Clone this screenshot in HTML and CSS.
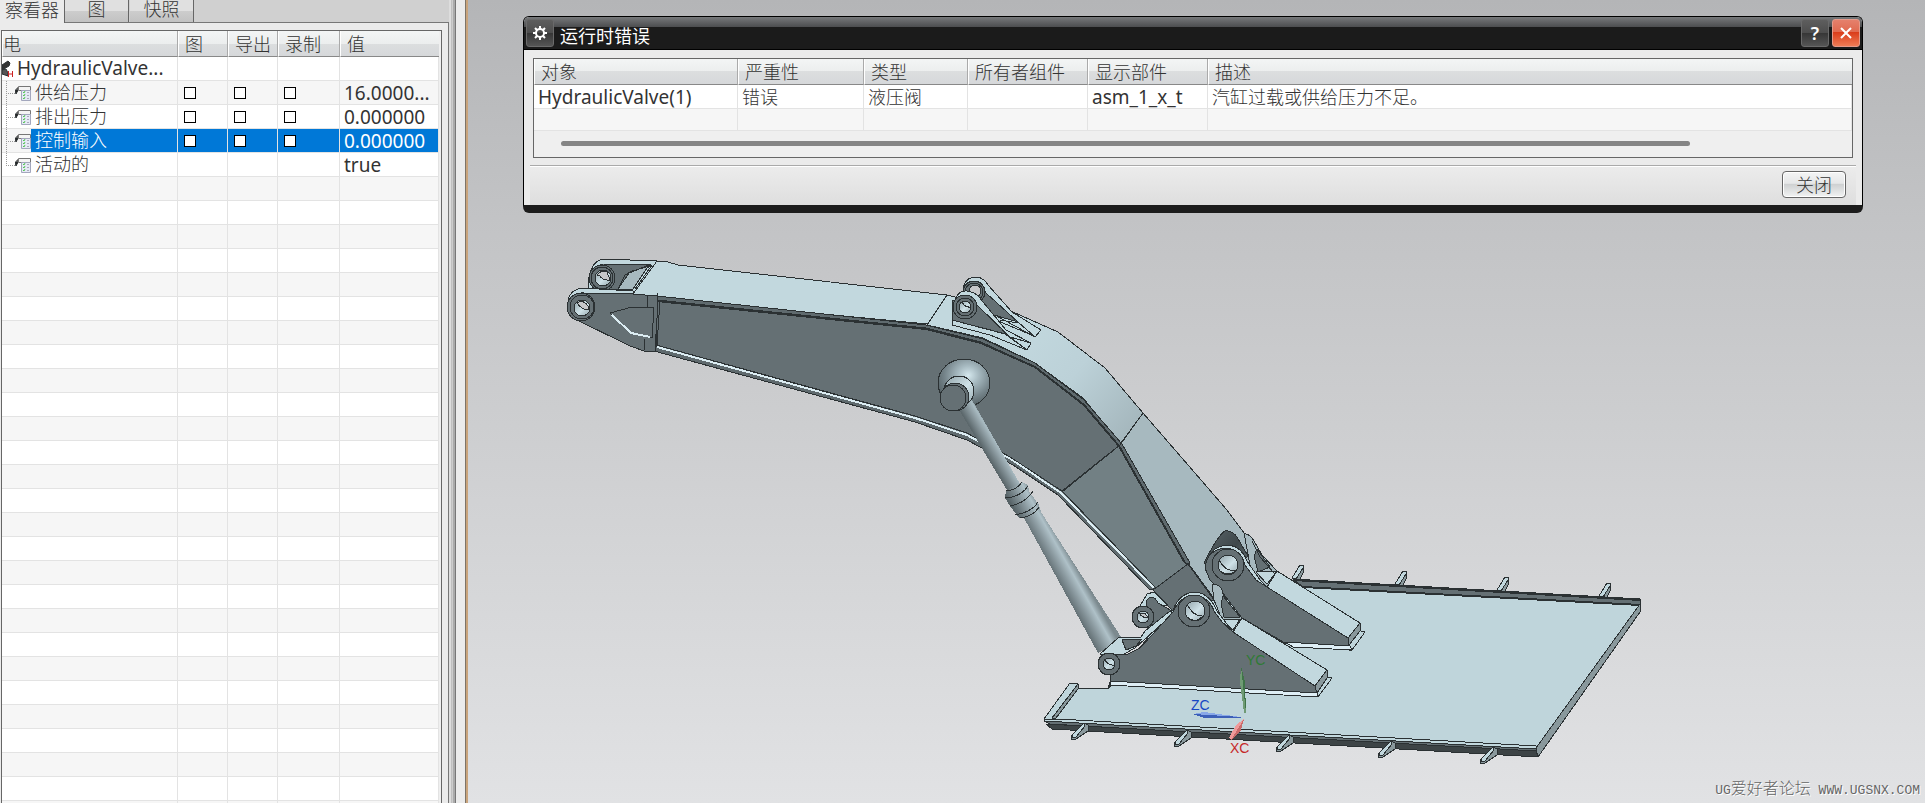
FILE: index.html
```
<!DOCTYPE html>
<html lang="zh-CN">
<head>
    <meta charset="UTF-8">
    <meta name="viewport" content="width=device-width, initial-scale=1.0">
    <title>运行时错误</title>
    <link rel="stylesheet" href="styles.css">
</head>
<body>
    <svg class="defs" width="0" height="0" aria-hidden="true">
        <symbol id="param" viewBox="0 0 16 16">
            <path d="M2 7V3h2" fill="none" stroke="#222"/>
            <path d="M0 5h3L1 9z" fill="#222"/>
            <path d="M3.500 1.500h12v4h-12z" fill="#f4f4f4" stroke="#777"/>
            <path d="M6.500 5.500h9v10h-9z" fill="#e6e9f6" stroke="#a3a7bd"/>
            <path d="M8 7l1 1 1-2M8 10l1 1 1-2M8 13l1 1 1-2" fill="none" stroke="#53c653"/>
            <path d="M12 7.500h2M12 10.500h2M12 13.500h2" stroke="#aab"/>
        </symbol>
    </svg>

    <aside class="side">
        <div class="tabs" role="tablist">
            <button class="tab active" role="tab" aria-selected="true">察看器</button>
            <button class="tab" role="tab">图</button>
            <button class="tab" role="tab">快照</button>
        </div>
        <div class="side-body">
            <div class="frame">
                <table class="grid params">
                    <colgroup>
                        <col>
                        <col class="w-plot">
                        <col class="w-plot">
                        <col class="w-record">
                        <col class="w-value">
                    </colgroup>
                    <thead>
                        <tr><th class="first">电</th><th>图</th><th>导出</th><th>录制</th><th>值</th></tr>
                    </thead>
                    <tbody>
                        <tr>
                            <td class="root latin">
                                <div class="node">
                                    <svg class="valve" width="12" height="18" viewBox="0 0 12 18" aria-hidden="true">
                                        <path d="M0 5l6-4 2 2-1 3-7 4z" fill="#333"/>
                                        <path d="M0 10l4-1 2 4v3L0 14z" fill="#555"/>
                                        <path d="M6.500 11v6M10.500 11v6M7 14h4" stroke="#c22" fill="none"/>
                                    </svg>
                                    <span>HydraulicValve...</span>
                                </div>
                            </td>
                            <td></td><td></td><td></td><td></td>
                        </tr>
                        <tr>
                            <td class="leaf"><div class="node"><i class="branch"></i><svg class="icon" aria-hidden="true"><use href="#param"/></svg><span>供给压力</span></div></td>
                            <td><input type="checkbox" aria-label="供给压力 图"></td>
                            <td><input type="checkbox" aria-label="供给压力 导出"></td>
                            <td><input type="checkbox" aria-label="供给压力 录制"></td>
                            <td class="latin">16.0000...</td>
                        </tr>
                        <tr>
                            <td class="leaf"><div class="node"><i class="branch"></i><svg class="icon" aria-hidden="true"><use href="#param"/></svg><span>排出压力</span></div></td>
                            <td><input type="checkbox" aria-label="排出压力 图"></td>
                            <td><input type="checkbox" aria-label="排出压力 导出"></td>
                            <td><input type="checkbox" aria-label="排出压力 录制"></td>
                            <td class="latin">0.000000</td>
                        </tr>
                        <tr class="selected">
                            <td class="leaf"><div class="node"><i class="branch"></i><svg class="icon" aria-hidden="true"><use href="#param"/></svg><span>控制输入</span></div></td>
                            <td><input type="checkbox" aria-label="控制输入 图"></td>
                            <td><input type="checkbox" aria-label="控制输入 导出"></td>
                            <td><input type="checkbox" aria-label="控制输入 录制"></td>
                            <td class="latin">0.000000</td>
                        </tr>
                        <tr>
                            <td class="leaf"><div class="node"><i class="branch last"></i><svg class="icon" aria-hidden="true"><use href="#param"/></svg><span>活动的</span></div></td>
                            <td></td><td></td><td></td>
                            <td class="latin">true</td>
                        </tr>
                        <tr class="filler"><td></td><td></td><td></td><td></td><td></td></tr>
                    </tbody>
                </table>
            </div>
        </div>
    </aside>
    <div class="splitter"></div>

    <main class="viewport">
        <svg class="model" viewBox="468 0 1457 803" preserveAspectRatio="xMidYMid slice" role="img" aria-label="HydraulicValve">
            <defs>
                <linearGradient id="bend" gradientUnits="userSpaceOnUse" x1="1020" y1="330" x2="1140" y2="430">
                    <stop offset="0" stop-color="#c2d8de"/>
                    <stop offset=".45" stop-color="#bcd1d8"/>
                    <stop offset="1" stop-color="#a3b5bb"/>
                </linearGradient>
                <linearGradient id="rod" gradientUnits="userSpaceOnUse" x1="984" y1="450" x2="999" y2="441">
                    <stop offset="0" stop-color="#5c686c"/>
                    <stop offset=".5" stop-color="#8d9ca2"/>
                    <stop offset=".8" stop-color="#a9bbc2"/>
                    <stop offset="1" stop-color="#7f8e93"/>
                </linearGradient>
                <linearGradient id="barrel" gradientUnits="userSpaceOnUse" x1="1057" y1="586" x2="1080" y2="573">
                    <stop offset="0" stop-color="#566266"/>
                    <stop offset=".45" stop-color="#8b9aa0"/>
                    <stop offset=".75" stop-color="#afc1c8"/>
                    <stop offset="1" stop-color="#7c8a8f"/>
                </linearGradient>
                <radialGradient id="ball" cx=".58" cy=".34" r=".65">
                    <stop offset="0" stop-color="#d5e8ee"/>
                    <stop offset=".3" stop-color="#a8bbc2"/>
                    <stop offset=".7" stop-color="#75848a"/>
                    <stop offset="1" stop-color="#566266"/>
                </radialGradient>
                <linearGradient id="hump" x1="0" y1="0" x2="1" y2="1">
                    <stop offset="0" stop-color="#5b666a"/>
                    <stop offset=".5" stop-color="#3f484b"/>
                    <stop offset="1" stop-color="#6c797d"/>
                </linearGradient>
                <linearGradient id="bore" x1="0" y1="0" x2="1" y2="1">
                    <stop offset="0" stop-color="#8fa0a6"/>
                    <stop offset=".55" stop-color="#cfe2e8"/>
                    <stop offset="1" stop-color="#93a4aa"/>
                </linearGradient>
                <g id="fin-far">
                    <path class="lit" d="M1395 584l8-13 4 1-6 13z"/>
                    <path class="edge" d="M1399 585l7-11v5l-3 6z"/>
                </g>
                <g id="fin-near">
                    <path class="edge" d="M1391 741l4 2v6l-12 8h-5l1-4z"/>
                    <path class="lit" d="M1391 741l1 3-9 11-4 0v-2z"/>
                </g>
            </defs>

            <!-- base plate -->
            <g>
                <use href="#fin-far" x="-103" y="-6"/>
                <use href="#fin-far"/>
                <use href="#fin-far" x="102" y="6"/>
                <use href="#fin-far" x="204" y="12"/>
                <path class="plate" d="M1044 719L1070 683 1078 684 1079 688 1108 689 1200 570 1300 583 1640 601V610L1538 757 1537 748z"/>
                <path class="side" d="M1293 579L1640 599V605L1303 587z"/>
                <path class="thick" d="M1293 580L1640 600M1303 587L1640 605"/>
                <path class="edge" d="M1640 604V612L1538 757 1536 748z"/>
                <path class="edge" d="M1078 684V689L1056 718H1052z"/>
                <path class="line" d="M1078 684L1052 718M1079 688H1092L1108 689 1110 682"/>
                <path class="lit" d="M1044 719L1058 719 1536 746V749L1044 721z"/>
                <path class="side" d="M1044 721L1536 749V752L1050 724z"/>
                <path class="deep" d="M1046 724L1536 751 1538 757 1052 729z"/>
                <use href="#fin-near" x="-307" y="-18"/>
                <use href="#fin-near" x="-204" y="-11"/>
                <use href="#fin-near" x="-102" y="-6"/>
                <use href="#fin-near"/>
                <use href="#fin-near" x="102" y="6"/>
            </g>

            <!-- rear boom lugs -->
            <path class="lit" d="M588 290Q588 262 603 259L657 261 633 294H600z"/>
            <path class="side" d="M590 278Q592 266 603 264L651 265 618 290 605 289z"/>
            <path class="mid" d="M618 289L629 273 649 265 633 289z"/>
            <path class="line" d="M618 289L625 275 632 271 650 266M635 289L652 265"/>
            <circle class="side" cx="602" cy="278" r="13"/>
            <circle class="line" cx="602" cy="278" r="11"/>
            <circle class="bore" cx="603" cy="278" r="8"/>
            <path class="hole" d="M597 275Q600 270 607 272L610 280Q603 281 599 275z"/>

            <!-- far bracket on the base -->
            <path class="mid" d="M1240 536Q1247 530 1254 541L1262 555 1277 571 1267 587 1250 570z"/>
            <path class="side" d="M1254 556L1257 549 1270 567 1258 572z"/>
            <path class="lit" d="M1256 572L1277 571 1267 584z"/>
            <path class="line" d="M1252 541L1260 557 1274 573"/>

            <!-- boom -->
            <path class="face" d="M657 261L668 262 678 265 947 295 953 297 1013 312 1058 332 927 324 657 298 633 294z"/>
            <path class="bend" d="M947 295L1013 312 1058 332 1105 368 1143 413 1121 444 1083 398 1035 363 983 338 927 325z"/>
            <path class="lower" d="M1143 413L1227 510 1244 533 1250 565 1213 597 1188 563 1121 443z"/>
            <path class="side" d="M657 296L760 308 926 325 983 339 1035 363 1084 400 1121 444 1062 492 1010 459 967 435 915 417 656 347z"/>
            <path class="side2" d="M1121 444L1188 564 1153 590 1062 491z"/>
            <path class="rim" d="M657 296L926 325 983 339 1035 363 1084 400 1122 444 1190 563 1186 564 1119 446 1084 405 1035 367 981 342 926 328 657 300z"/>
            <path class="thick" d="M657 301L926 329 981 343 1035 367 1084 405 1119 446 1185 563"/>
            <path class="rim" d="M654 346L915 416 967 433 1010 457 1062 491 1156 588 1150 590 1058 495 1013 465 967 440 915 422 654 351z"/>
            <path class="glint" d="M657 347L915 418 967 435 1011 459 1061 493 1154 588"/>
            <path class="line" d="M656 345L915 416 967 433 1010 457 1062 491 1156 588"/>
            <path class="line" d="M947 295L927 325M1143 413L1120 445 1062 492M660 300L657 346M654 346V351"/>

            <!-- front boom lug -->
            <path class="lit" d="M568 300Q570 290 582 288L633 291V295L580 296z"/>
            <path class="side" d="M570 300Q575 292 584 293L633 294 657 296 658 302 655 351H644L630 346 577 320z"/>
            <path class="line" d="M657 293V300L660 301M647 296V307M644 339V350"/>
            <path class="line" d="M610 313L632 307 654 308 652 338 630 333z"/>
            <path class="glint" d="M612 315L631 333 650 337"/>
            <circle class="side" cx="581" cy="307" r="14"/>
            <circle class="line" cx="582" cy="307" r="12"/>
            <circle class="bore" cx="582" cy="308" r="8"/>
            <path class="hole" d="M577 303Q583 299 588 306V310Q581 309 577 303z"/>

            <!-- brackets on top of the boom -->
            <path class="side" d="M962 293L985 290 1013 314 1018 322 994 315z"/>
            <path class="lit" d="M963 290Q964 277 977 277 984 278 988 285L1012 312 1041 330 1035 337 1018 322 986 293 980 282z"/>
            <path class="lit" d="M995 315L1035 337 1027 333 998 321z"/>
            <circle class="side" cx="974" cy="292" r="11"/>
            <circle class="line" cx="974" cy="292" r="9"/>
            <circle class="hole" cx="975" cy="291" r="6"/>
            <path class="lit" d="M952 320L1005 334 1027 350 990 335 952 325z"/>
            <path class="side" d="M952 301L978 300 1006 334 952 320z"/>
            <path class="lit" d="M954 303Q957 290 967 291 975 292 979 297L1006 330 1031 343 1027 350 1010 337 976 304 969 296z"/>
            <circle class="side" cx="965" cy="307" r="12"/>
            <circle class="line" cx="965" cy="307" r="9"/>
            <circle class="bore" cx="965" cy="307" r="6"/>
            <path class="line" d="M962 302Q965 308 971 307M1000 320L1018 323M1010 337L1031 343"/>

            <!-- cylinder -->
            <ellipse class="ball" cx="964" cy="383" rx="26" ry="24"/>
            <path class="rod" d="M958 408L972 400 1020 484 1008 492z"/>
            <circle class="bore" cx="959" cy="391" r="15"/>
            <circle class="side" cx="955" cy="397" r="14"/>
            <circle class="side" cx="953" cy="398" r="13"/>
            <path class="barrel" d="M1006 491L1022 482 1028 485 1029 491 1039 505 1041 512 1123 640 1098 653 1024 518 1019 518 1010 506 1005 498z"/>
            <path class="line" d="M1006 491Q1017 490 1022 482M1005 498Q1021 497 1028 486M1010 506Q1026 503 1033 491M1015 515Q1032 512 1038 502M1020 518Q1034 516 1039 507"/>

            <!-- far bracket body -->
            <path class="hump" d="M1204 563Q1218 535 1225 531 1232 530 1237 537L1248 556 1220 580z"/>
            <path class="lit" d="M1205 570Q1208 545 1229 545 1242 547 1247 561L1260 580 1267 587 1260 584 1240 567 1226 549z"/>
            <path class="side" d="M1205 568Q1207 549 1227 548 1240 550 1245 565L1256 580 1267 587 1348 638 1349 646 1285 643 1242 618 1222 592 1210 580z"/>
            <path class="lit" d="M1267 587L1277 571 1360 623 1348 638z"/>
            <path class="edge" d="M1348 638L1360 623V631L1349 645z"/>
            <path class="glow" d="M1285 642L1350 646 1352 650 1293 647z"/>
            <path class="line" d="M1361 631L1365 632 1352 650H1349"/>
            <circle class="side" cx="1228" cy="565" r="16"/>
            <circle class="bore" cx="1228" cy="565" r="10"/>
            <path class="line" d="M1219 560Q1226 573 1237 570M1220 571Q1228 577 1236 571"/>

            <!-- boom foot and the small lug -->
            <path class="side" d="M1153 590L1188 564 1214 600 1174 612z"/>
            <path class="mid" d="M1212 584Q1222 584 1223 594L1230 606 1242 618 1233 632 1221 617 1214 600z"/>
            <path class="side" d="M1221 604L1223 596 1240 617H1224z"/>
            <path class="lit" d="M1223 620L1240 619 1233 630z"/>
            <path class="lit" d="M1140 606L1147 594 1154 592 1167 605 1150 606z"/>
            <path class="side" d="M1147 600Q1153 593 1158 603L1172 611 1155 627 1143 628z"/>
            <circle class="side" cx="1143" cy="617" r="11"/>
            <circle class="bore" cx="1143" cy="617" r="6"/>
            <path class="hole" d="M1139 613h6l3 5q-6 0-9-5z"/>

            <!-- near bracket body -->
            <path class="lit" d="M1100 654L1118 638 1141 637 1145 631 1170 611 1173 614 1155 630 1135 648 1124 654z"/>
            <path class="side" d="M1122 640L1142 639 1136 646 1126 650z"/>
            <path class="lit" d="M1173 610Q1180 592 1196 592 1210 594 1217 611L1233 632 1220 620 1196 596z"/>
            <path class="side" d="M1173 612Q1181 595 1194 596 1209 596 1214 611L1222 622 1233 632 1315 686 1317 693 1110 681V675L1099 666 1103 654H1128L1140 648z"/>
            <path class="lit" d="M1233 632L1242 618 1327 670 1315 686z"/>
            <path class="edge" d="M1315 686L1327 670V678L1317 693z"/>
            <path class="glow" d="M1110 681L1317 693 1318 697 1110 685z"/>
            <path class="line" d="M1328 677L1332 678 1318 697"/>
            <circle class="side" cx="1194" cy="611" r="16"/>
            <circle class="bore" cx="1195" cy="611" r="10"/>
            <path class="line" d="M1187 604Q1193 617 1204 616M1187 617Q1195 624 1202 617"/>
            <circle class="side" cx="1109" cy="664" r="11"/>
            <circle class="bore" cx="1109" cy="664" r="6"/>
            <path class="line" d="M1105 660Q1108 666 1115 665"/>

            <!-- coordinate triad -->
            <path d="M1241 666L1245 682 1246 713H1244L1240 682z" fill="#6f9a74"/>
            <path d="M1241 666L1245 682 1246 713z" fill="#3f7448"/>
            <path d="M1193 714L1204 712 1241 717V718L1204 718z" fill="#89a8e8"/>
            <path d="M1193 714L1241 717V718L1204 718z" fill="#3c5fb8"/>
            <path d="M1244 719L1241 730 1231 740 1229 738 1236 725z" fill="#ef9a9a"/>
            <path d="M1244 719L1241 730 1231 740z" fill="#c96b6b"/>
            <text x="1246" y="665" fill="#2f7a35">YC</text>
            <text x="1191" y="710" fill="#1746c4">ZC</text>
            <text x="1230" y="753" fill="#c62828">XC</text>
        </svg>

        <section class="dialog" role="dialog" aria-labelledby="dialog-title">
            <header class="titlebar">
                <button class="tool" aria-label="选项">
                    <svg width="16" height="16" viewBox="0 0 16 16" aria-hidden="true">
                        <circle cx="8" cy="8" r="4" fill="none" stroke="#fff" stroke-width="2"/>
                        <path d="M8 1v3M8 12v3M1 8h3M12 8h3M3 3l2 2M11 11l2 2M13 3l-2 2M5 11l-2 2" stroke="#fff" stroke-width="2"/>
                    </svg>
                </button>
                <h1 id="dialog-title">运行时错误</h1>
                <button class="tool" aria-label="帮助">?</button>
                <button class="tool close" aria-label="关闭窗口">
                    <svg width="14" height="14" viewBox="0 0 14 14" aria-hidden="true">
                        <path d="M2 2l10 10M12 2L2 12" stroke="#fff" stroke-width="2"/>
                    </svg>
                </button>
            </header>
            <div class="dialog-body">
                <div class="frame errors-frame">
                    <table class="grid errors">
                        <colgroup>
                            <col class="w-object">
                            <col class="w-severity">
                            <col class="w-type">
                            <col class="w-part">
                            <col class="w-part">
                            <col>
                        </colgroup>
                        <thead>
                            <tr><th>对象</th><th>严重性</th><th>类型</th><th>所有者组件</th><th>显示部件</th><th>描述</th></tr>
                        </thead>
                        <tbody>
                            <tr><td class="latin">HydraulicValve(1)</td><td>错误</td><td>液压阀</td><td></td><td class="latin">asm_1_x_t</td><td>汽缸过载或供给压力不足。</td></tr>
                            <tr><td></td><td></td><td></td><td></td><td></td><td></td></tr>
                        </tbody>
                    </table>
                    <div class="scroll"><div class="thumb"></div></div>
                </div>
            </div>
            <footer class="actions">
                <button class="btn">关闭</button>
            </footer>
        </section>

        <p class="watermark">UG<span>爱好者论坛</span> WWW.UGSNX.COM</p>
    </main>
</body>
</html>
```
FILE: styles.css
```
:root {
    --panel: #ebebeb;
    --frame: #666666;
    --grid-line: #e3e3e3;
    --row-alt: #f6f6f6;
    --select: #0078d7;
    --edge: #2b3133;
}

* {
    box-sizing: border-box;
}

body {
    margin: 0;
    height: 100vh;
    display: flex;
    overflow: hidden;
    background: var(--panel);
    color: #333;
    font: 18px/22px "Noto Sans", "Noto Sans CJK SC", sans-serif;
}

button {
    font: inherit;
    color: inherit;
    padding: 0;
}

.defs {
    position: absolute;
}

/* side panel */
.side {
    width: 449px;
    flex: none;
    display: flex;
    flex-direction: column;
}

.tabs {
    display: flex;
    flex: none;
    height: 23px;
    background: #d0d0d0;
    border-bottom: 1px solid #777;
}

.tab {
    width: 64px;
    height: 22px;
    margin-right: 1px;
    padding-bottom: 4px;
    line-height: 18px;
    font-weight: 300;
    border: 0;
    border-right: 1px solid #666;
    background: linear-gradient(#e0e0e0 50%, #cdcdcd 50%, #c2c2c2);
}

.tab.active {
    width: 65px;
    height: 23px;
    margin-right: 0;
    background: var(--panel);
}

.side-body {
    flex: 1;
    min-height: 0;
    display: flex;
    padding: 7px 6px 0 1px;
    border-right: 1px solid #777;
}

.frame {
    flex: 1;
    border: 1px solid var(--frame);
    background: #efefef;
}

.side .frame {
    border-bottom: 0;
    padding-right: 2px;
}

.splitter {
    width: 19px;
    flex: none;
    background: linear-gradient(90deg,
        #ddd 0 2px, #bfbfbf 2px 3px, #ccc 3px 4px, #aaa 4px 6px, #777 6px 7px,
        var(--panel) 7px 16px, #7d7468 16px 17px, #c9a47c 17px);
}

/* tables */
.grid {
    width: 100%;
    table-layout: fixed;
    border-collapse: separate;
    border-spacing: 0;
}

.grid th {
    height: 26px;
    padding: 0 0 0 6px;
    font-weight: 300;
    text-align: left;
    border-right: 1px solid #aaa;
    border-left: 1px solid #fff;
    border-bottom: 1px solid #888;
    background: linear-gradient(#f3f5f5, #eceeee 50%, #dcdedf 50%, #d6d8da);
}

.grid td {
    height: 24px;
    padding: 0 0 0 4px;
    line-height: 22px;
    font-weight: 300;
    white-space: nowrap;
    border-right: 1px solid var(--grid-line);
    border-bottom: 1px solid var(--grid-line);
    background: #fff;
}

.grid td.latin {
    font-size: 19px;
    font-weight: 400;
}

.grid th:last-child {
    border-right: 0;
}

.grid tbody tr:nth-child(even) td {
    background: var(--row-alt);
}

.params {
    height: 100%;
}

.params .w-plot { width: 50px; }
.params .w-record { width: 62px; }
.params .w-value { width: 99px; }

.params th.first,
.params td.root,
.params td.leaf {
    padding-left: 0;
}

.grid tbody tr.filler td {
    height: auto;
    border-bottom: 0;
    background: repeating-linear-gradient(var(--row-alt) 0 23px, var(--grid-line) 23px 24px, #fff 24px 47px, var(--grid-line) 47px 48px);
}

.grid tbody tr.selected td {
    color: #fff;
}

.grid tbody tr.selected td:not(.leaf),
.selected .node span {
    background: var(--select);
}

.node {
    display: flex;
    align-items: center;
    height: 23px;
}

.node span {
    flex: 1;
    padding: 0 0 1px 4px;
}

.root .node span {
    padding-left: 3px;
}

.branch {
    align-self: stretch;
    width: 9px;
    margin-left: 4px;
    background:
        repeating-linear-gradient(#999 0 1px, transparent 1px 2px) 0 0 / 1px 100% no-repeat,
        repeating-linear-gradient(90deg, #999 0 1px, transparent 1px 2px) 0 12px / 100% 1px no-repeat;
}

.branch.last {
    background-size: 1px 12px, 100% 1px;
}

.icon {
    width: 16px;
    height: 16px;
}

.grid input {
    appearance: none;
    display: block;
    width: 12px;
    height: 12px;
    margin: 0 0 0 2px;
    border: 1px solid #000;
    background: #fff;
}

/* graphics window */
.viewport {
    flex: 1;
    min-width: 0;
    position: relative;
    background: linear-gradient(#b4b5b7, #c2c3c5 27%, #d5d6d8 72%, #e1e2e4);
}

.model {
    display: block;
    width: 100%;
    height: 100%;
    shape-rendering: crispEdges;
}

.model text {
    font: 14px "Liberation Sans", sans-serif;
}

.model path,
.model circle,
.model ellipse {
    stroke-linejoin: round;
}

.line, .thick, .glint { fill: none; stroke: var(--edge); }
.thick { stroke-width: 2; }
.glint { stroke: #dcedf3; stroke-width: 2; }
.side, .side2, .lit, .plate, .face, .bend, .lower, .edge, .deep, .mid, .rim, .bore, .ball, .hump, .glow { stroke: var(--edge); }
svg .side { fill: #657074; }
.side2 { fill: #728084; }
.rim { fill: #5f6a6e; }
.lit { fill: #c2d8de; }
.plate { fill: #bfd5db; }
.face { fill: #c2d8de; }
.bend { fill: url(#bend); }
.lower { fill: #a7b9bf; }
.edge { fill: #89989c; }
.deep { fill: #3d4446; }
.mid { fill: #a7b9bf; }
.glow { fill: #deeef5; }
.bore { fill: url(#bore); }
.ball { fill: url(#ball); }
.hump { fill: url(#hump); }
.hole { fill: #c6c7c9; stroke: var(--edge); }
.rod { fill: url(#rod); }
.barrel { fill: url(#barrel); }

/* error window, floats over the model */
.dialog {
    position: absolute;
    top: 16px;
    left: 55px;
    right: 62px;
    border: 1px solid #000;
    border-bottom: 8px solid #1c1c1c;
    border-radius: 6px;
    background: var(--panel);
    overflow: hidden;
}

.titlebar {
    display: flex;
    align-items: center;
    gap: 3px;
    height: 33px;
    padding: 0 2px;
    color: #fff;
    background: linear-gradient(#77797b, #4c4d4f 10px, #1b1b1b 10px);
    border-bottom: 1px solid #000;
}

.titlebar h1 {
    flex: 1;
    margin: 0;
    padding: 5px 0 0 3px;
    font-size: 18px;
    line-height: 24px;
    font-weight: 400;
}

.tool {
    display: flex;
    align-items: center;
    justify-content: center;
    width: 28px;
    height: 28px;
    border: 1px solid #6a6a6a;
    border-radius: 3px;
    background: linear-gradient(#5e5e5e, #4d4d4d 50%, #363636 50%, #555);
    font-weight: 600;
}

.tool.close {
    border-color: #e59a8a;
    background: linear-gradient(#e5806c, #e06a50 45%, #d93a18 45%, #ee7b55);
}

.dialog-body {
    padding: 8px 9px 7px;
}

.errors .w-object { width: 204px; }
.errors .w-severity { width: 126px; }
.errors .w-type { width: 104px; }
.errors .w-part { width: 120px; }

.errors tr:last-child td {
    height: 22px;
}

.scroll {
    height: 26px;
    padding: 10px 162px 0 27px;
}

.thumb {
    height: 5px;
    border-radius: 3px;
    background: #858585;
}

.actions {
    display: flex;
    justify-content: flex-end;
    align-items: flex-start;
    height: 40px;
    margin: 0 6px;
    padding: 5px 10px 0 0;
    border-top: 1px solid #aaa;
    background: linear-gradient(#ececec, #dedede);
    box-shadow: inset 0 1px #fff;
}

.btn {
    width: 64px;
    height: 27px;
    border: 1px solid #666;
    border-radius: 4px;
    background: linear-gradient(#f4f5f5, #e6e7e8 45%, #cfd1d2 50%, #f2f3f3);
    box-shadow: inset 0 0 0 1px #fff;
    font-weight: 300;
}

.watermark {
    position: absolute;
    right: 5px;
    bottom: 2px;
    margin: 0;
    color: #666;
    font: 13px/20px "Liberation Mono", monospace;
    text-shadow: 1px 1px #fff;
}

.watermark span {
    font: 300 16px/20px "Noto Sans CJK SC", sans-serif;
}
```
